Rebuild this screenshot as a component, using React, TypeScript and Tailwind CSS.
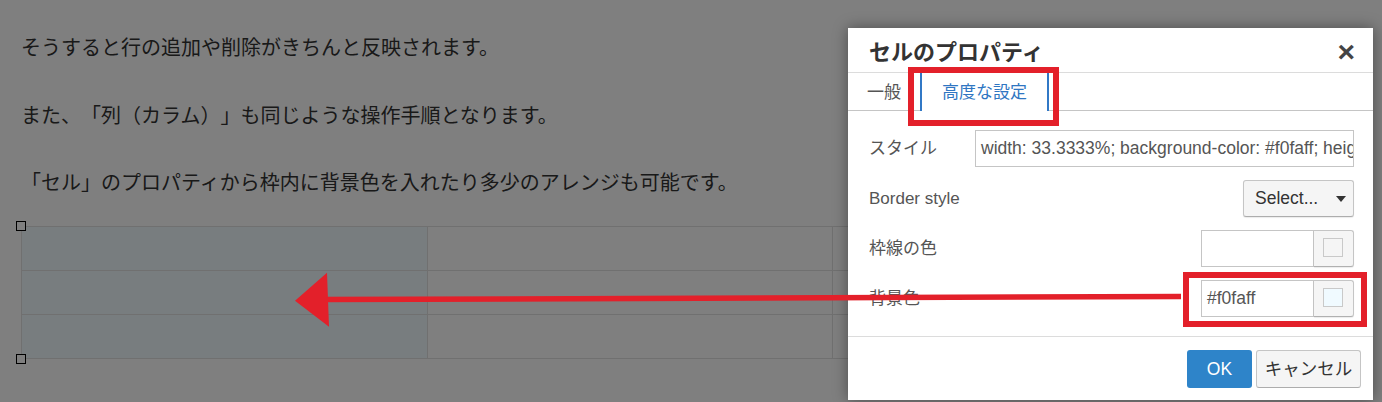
import React from "react";

const sans = "font-['Liberation_Sans','Noto_Sans_CJK_JP',sans-serif]";

function ColorField({ value, swatch }: { value: string; swatch: string }) {
  return (
    <div className="flex h-[37px]">
      <div className="flex h-full w-[113px] items-center border border-[#c5c5c5] pl-[5px] text-[17.5px] text-[#555]">
        {value}
      </div>
      <div className="flex h-full w-[40px] items-start rounded-r-[3px] border border-l-0 border-[#c5c5c5] border-b-[#b0b0b0] bg-[#f5f5f5] pl-[9px] pt-[7px] shadow-[0_1px_1px_rgba(0,0,0,0.08)]">
        <div className={`h-[19px] w-[20px] border border-[#c9c9c9] ${swatch}`} />
      </div>
    </div>
  );
}

function FormRow({ label, children }: { label: string; children: React.ReactNode }) {
  return (
    <div className="flex h-[37px] items-center justify-between">
      <span className="text-[17px] text-[#555]">{label}</span>
      {children}
    </div>
  );
}

export default function App() {
  return (
    <div className={`relative h-[402px] w-[1382px] overflow-hidden bg-white ${sans}`}>
      {/* editor content */}
      <div className="flex flex-col pl-[21px] pt-[32px] font-['Noto_Sans_CJK_JP',sans-serif] text-[20px] leading-[30px] text-[#333] [text-spacing-trim:space-all]">
        <p>そうすると行の追加や削除がきちんと反映されます。</p>
        <p className="mt-[38px]">また、「列（カラム）」も同じような操作手順となります。</p>
        <p className="mt-[37px]">「セル」のプロパティから枠内に背景色を入れたり多少のアレンジも可能です。</p>

        <div className="relative mt-[29px] w-[1218px]">
          <table className="w-full table-fixed border-collapse">
            <tbody>
              {[0, 1, 2].map((r) => (
                <tr key={r} className="h-[44px]">
                  <td className="border border-[#e0e0e0] bg-[#f0faff]" />
                  <td className="border border-[#e0e0e0]" />
                  <td className="border border-[#e0e0e0]" />
                </tr>
              ))}
            </tbody>
          </table>
          <div className="absolute left-[-5px] top-[-5px] h-[10px] w-[10px] border border-black bg-white" />
          <div className="absolute bottom-[-5px] left-[-5px] h-[10px] w-[10px] border border-black bg-white" />
        </div>
      </div>

      {/* modal backdrop */}
      <div className="absolute inset-0 bg-black/50" />

      {/* dialog */}
      <div className="absolute left-[848px] top-[28px] flex h-[372px] w-[525px] flex-col bg-white shadow-[0_0_14px_rgba(0,0,0,0.4)]">
        <div className="flex h-[45px] shrink-0 items-center justify-between border-b border-[#dcdcdc] pl-[21px] pr-[18px]">
          <span className="font-['Noto_Sans_CJK_JP',sans-serif] text-[22px] font-bold text-[#333]">セルのプロパティ</span>
          <span className="mt-[4px] font-['Liberation_Sans',sans-serif] text-[30px] font-bold leading-none text-[#444]">×</span>
        </div>

        <div className="flex h-[38px] shrink-0 border-b border-[#c5c5c5]">
          <div className="flex items-center px-[19px] pt-[2px] text-[17px] text-[#555]">一般</div>
          <div className="-mb-px flex items-center border-x-2 border-[#3178c6] bg-white px-[20px] pt-[2px] text-[17px] text-[#2f76c2]">
            高度な設定
          </div>
        </div>

        <div className="flex flex-col gap-[13px] pb-[19px] pl-[21px] pr-[19px] pt-[19px]">
          <FormRow label="スタイル">
            <div className="flex h-[37px] w-[379px] items-center overflow-hidden whitespace-nowrap border border-[#c5c5c5] pl-[5px] text-[17.5px] text-[#555]">
              width: 33.3333%; background-color: #f0faff; height: 44px;
            </div>
          </FormRow>
          <FormRow label="Border style">
            <div className="flex h-[37px] w-[111px] items-center justify-between rounded-[3px] border border-[#c5c5c5] border-b-[#adadad] bg-[#f5f5f5] pl-[11px] pr-[7px] text-[17.5px] text-[#333] shadow-[0_1px_1px_rgba(0,0,0,0.08)]">
              <span>Select...</span>
              <svg width="10" height="6" viewBox="0 0 10 6">
                <polygon points="0,0 10,0 5,6" fill="#333" />
              </svg>
            </div>
          </FormRow>
          <FormRow label="枠線の色">
            <ColorField value="" swatch="bg-transparent" />
          </FormRow>
          <FormRow label="背景色">
            <ColorField value="#f0faff" swatch="bg-[#f0faff]" />
          </FormRow>
        </div>

        <div className="flex flex-1 items-start justify-end gap-[4px] border-t border-[#dcdcdc] pr-[12px] pt-[13px]">
          <button className="flex h-[38px] w-[65px] items-center justify-center rounded-[3px] bg-[#2e84c9] text-[17.5px] text-white">
            OK
          </button>
          <button className="flex h-[38px] w-[105px] items-center justify-center rounded-[3px] border border-[#c5c5c5] border-b-[#adadad] bg-[#f5f5f5] text-[17.5px] text-[#333]">
            キャンセル
          </button>
        </div>
      </div>

      {/* annotations */}
      <div className="absolute left-[908px] top-[67px] h-[59px] w-[151px] border-[6px] border-[#e3202a]" />
      <div className="absolute left-[1183px] top-[272px] h-[55px] w-[184px] border-[6px] border-[#e3202a]" />
      <svg className="pointer-events-none absolute left-0 top-0" width="1382" height="402" viewBox="0 0 1382 402">
        <line x1="320" y1="299.6" x2="1181" y2="296.5" stroke="#e3202a" strokeWidth="5.5" />
        <polygon points="295,300.7 327,272.7 329,326.7" fill="#e3202a" />
      </svg>
    </div>
  );
}
